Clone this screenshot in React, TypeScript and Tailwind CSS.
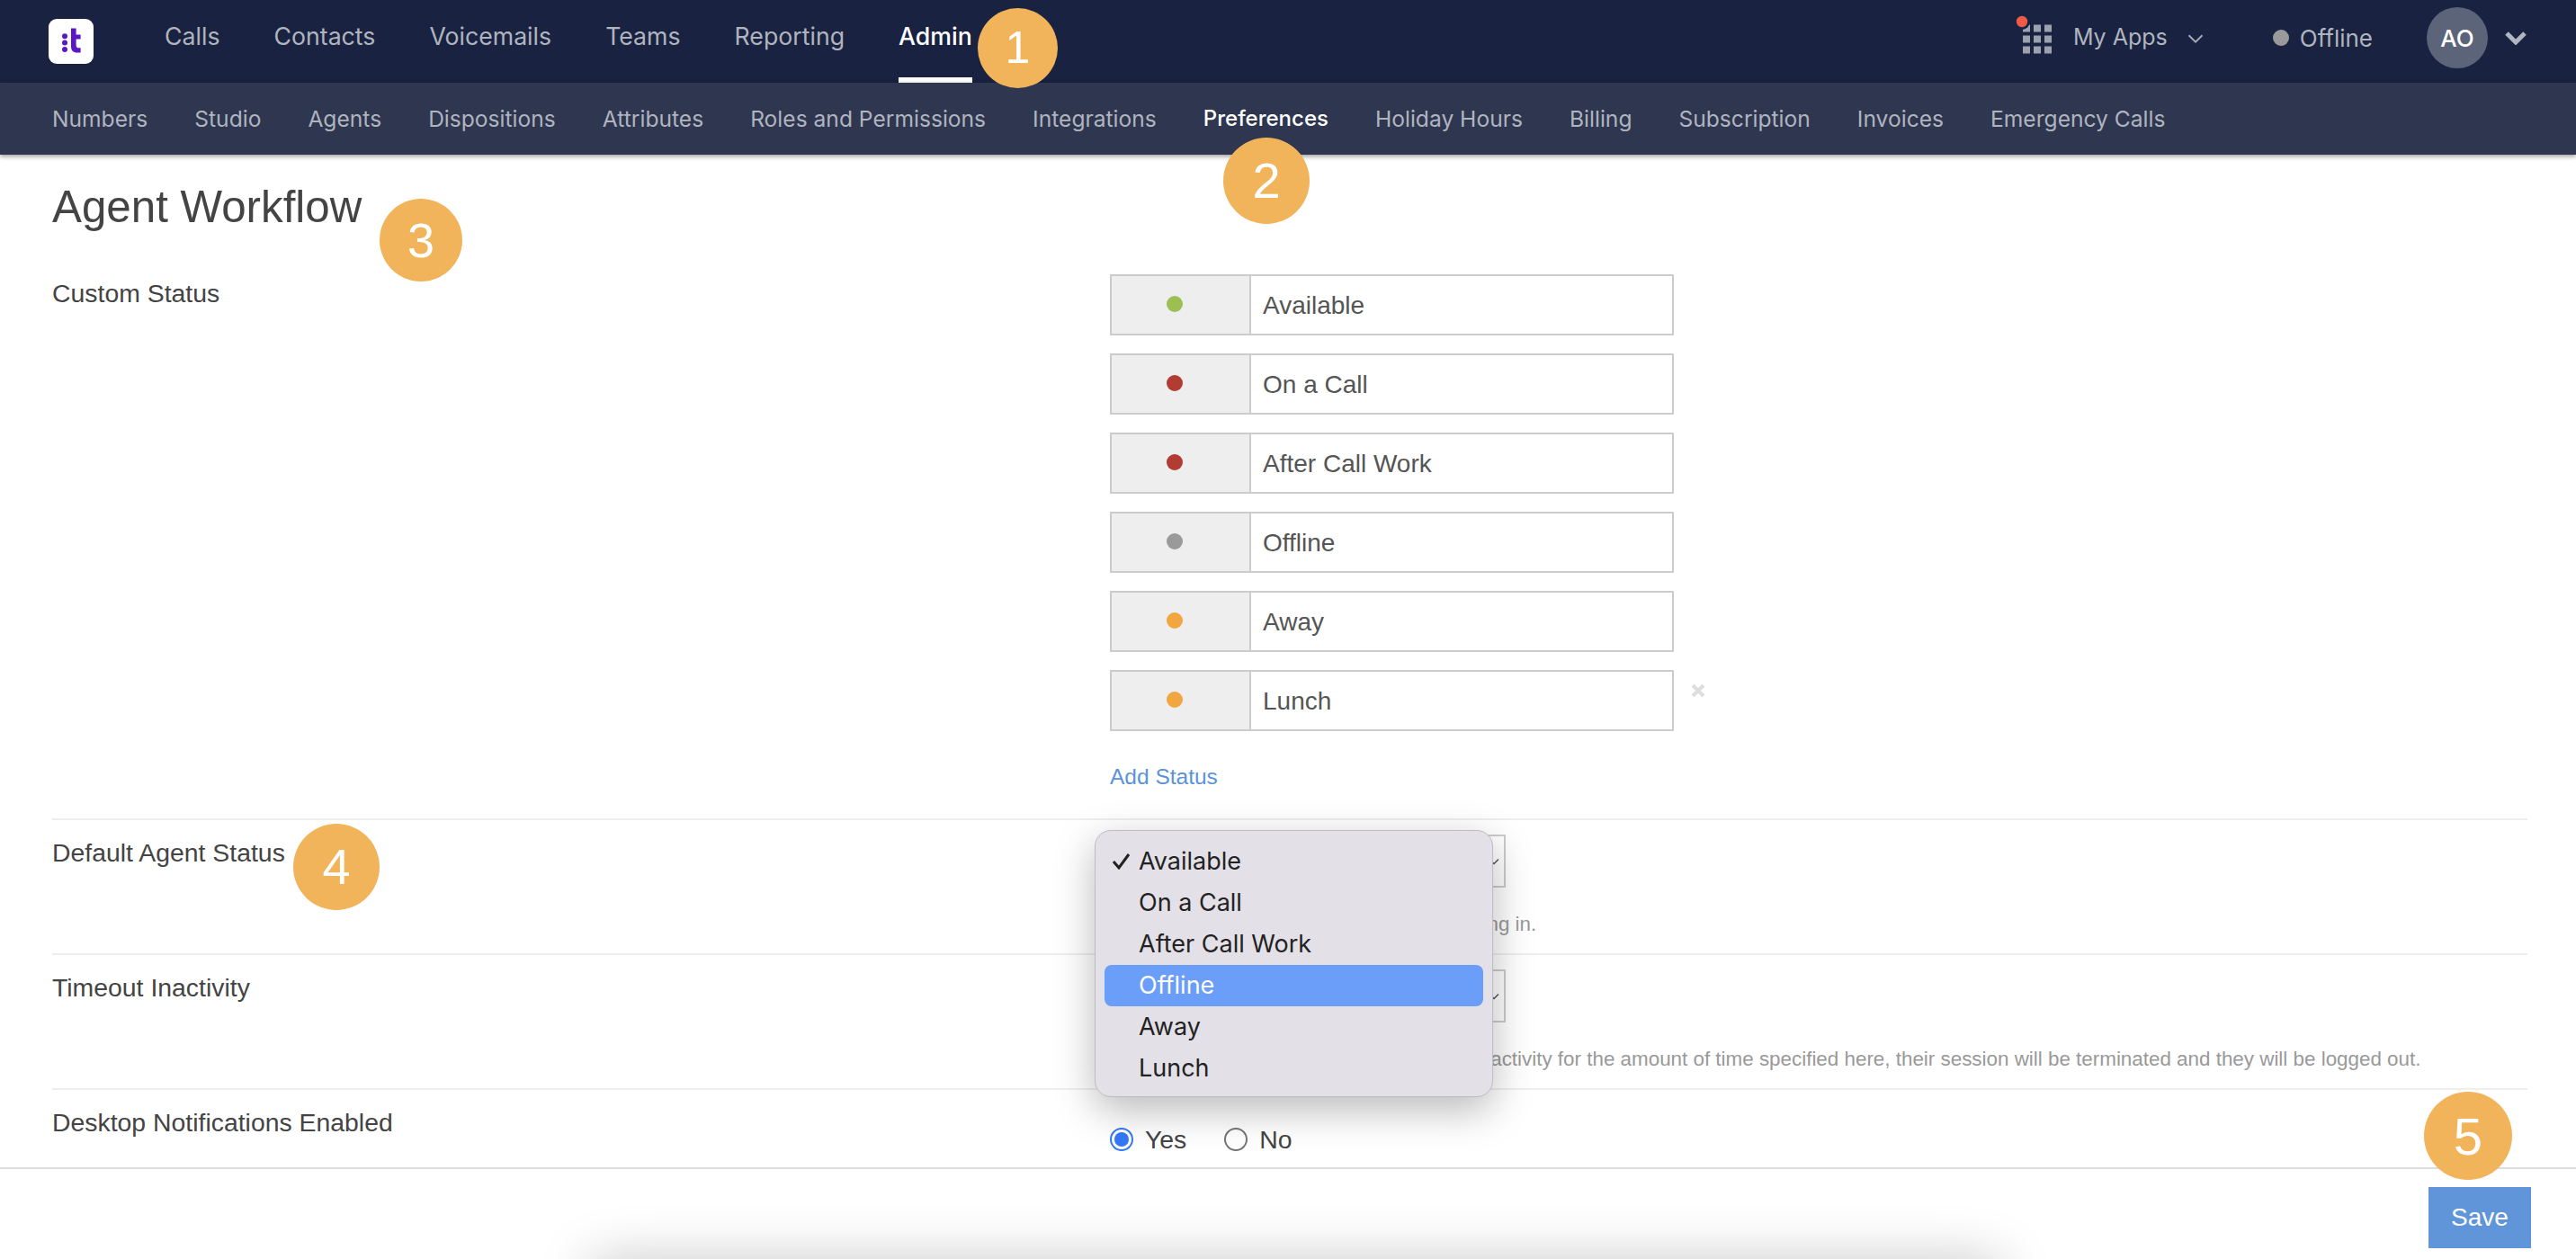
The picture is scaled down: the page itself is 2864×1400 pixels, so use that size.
import React from "react";

const MAIN_NAV = ["Calls", "Contacts", "Voicemails", "Teams", "Reporting", "Admin"];
const SUB_NAV = ["Numbers", "Studio", "Agents", "Dispositions", "Attributes", "Roles and Permissions", "Integrations", "Preferences", "Holiday Hours", "Billing", "Subscription", "Invoices", "Emergency Calls"];
const STATUSES: { label: string; dot: string }[] = [
  { label: "Available", dot: "bg-[#9bbf51]" },
  { label: "On a Call", dot: "bg-[#b23b32]" },
  { label: "After Call Work", dot: "bg-[#b23b32]" },
  { label: "Offline", dot: "bg-[#9a9a9a]" },
  { label: "Away", dot: "bg-[#f2a63f]" },
  { label: "Lunch", dot: "bg-[#f2a63f]" },
];
const OPTIONS = ["Available", "On a Call", "After Call Work", "Offline", "Away", "Lunch"];

function Badge({ n, className }: { n: number; className: string }) {
  return (
    <div className={`absolute z-30 flex items-center justify-center rounded-full bg-[#f1b45a] text-white font-['Liberation_Sans',sans-serif] ${className}`}>
      {n}
    </div>
  );
}

function Chevron({ className, width = 3 }: { className: string; width?: number }) {
  return (
    <svg viewBox="0 0 24 16" className={className} fill="none" stroke="currentColor" strokeWidth={width} aria-hidden="true">
      <path d="M2 3l10 10L22 3" />
    </svg>
  );
}

function Select() {
  return (
    <div className="flex h-[59px] w-[440px] items-center justify-end border-2 border-[#cccccc] bg-white pr-[5px] text-[#555]">
      <Chevron className="h-[8px] w-[12px]" width={3} />
    </div>
  );
}

export default function App() {
  return (
    <div className="relative flex h-[1400px] w-[2864px] flex-col overflow-hidden bg-white font-['Liberation_Sans',sans-serif]">
      {/* top bar */}
      <header className="flex h-[92px] shrink-0 items-center bg-[#192240] pl-[54px] pr-[55px] font-['Inter',sans-serif]">
        <svg viewBox="0 0 50 50" className="h-[50px] w-[50px] shrink-0" aria-label="logo">
          <rect width="50" height="50" rx="9" fill="#ffffff" />
          <circle cx="18" cy="19.3" r="3" fill="#5a17c4" />
          <circle cx="18" cy="26.5" r="3" fill="#5a17c4" />
          <circle cx="18" cy="34" r="3" fill="#5a17c4" />
          <path d="M25 10.5h5.6v7h5v5h-5v6.5c0 2.600 1 3.300 3 3.300h2v5.200h-3.600c-4.700 0-7-2.500-7-7z" fill="#5a17c4" />
        </svg>
        <nav className="ml-[79px] flex h-full items-center gap-[60px] text-[26.7px]">
          {MAIN_NAV.map((item) => (
            <a key={item} className={`relative flex h-full items-center pb-[11px] ${item === "Admin" ? "font-medium text-white" : "text-[#b0b4bf]"}`}>
              {item}
              {item === "Admin" && <span className="absolute bottom-0 left-0 right-0 h-[6px] bg-white" />}
            </a>
          ))}
        </nav>
        <div className="ml-auto flex items-center pb-[8px]">
          <svg viewBox="0 0 44 44" className="mb-[8px] h-[44px] w-[44px]" aria-hidden="true">
            {[0, 1, 2].flatMap((r) =>
              [0, 1, 2].map((c) => (
                <rect key={`${r}${c}`} x={8 + c * 12} y={11.5 + r * 12} width="8" height="8" fill="#9ca1b0" />
              ))
            )}
            <circle cx="7" cy="8" r="9" fill="#192240" />
            <circle cx="7" cy="8" r="6.200" fill="#ee5a45" />
          </svg>
          <span className="ml-[20px] text-[25px] text-[#b0b4bf]">My Apps</span>
          <Chevron className="ml-[22px] mt-[2px] h-[12px] w-[18px] text-[#a6abb8]" width={2.5} />
          <span className="ml-[77px] h-[18px] w-[18px] rounded-full bg-[#9a9a9a]" />
          <span className="ml-[12px] text-[26px] text-[#b0b4bf]">Offline</span>
          <div className="ml-[60px] flex h-[68px] w-[68px] items-center justify-center rounded-full bg-[#5c6479] text-[26px] font-medium text-white">AO</div>
          <Chevron className="ml-[19px] h-[16px] w-[24px] text-[#b0b5c0]" width={5} />
        </div>
      </header>

      {/* sub nav */}
      <nav className="relative z-10 flex h-[80px] shrink-0 items-center gap-[52px] bg-[#2e3650] pl-[58px] font-['Inter',sans-serif] text-[24.6px] shadow-[0_2px_5px_rgba(0,0,0,0.4)]">
        {SUB_NAV.map((item) => (
          <a key={item} className={item === "Preferences" ? "text-[24px] font-medium text-white" : "text-[#b0b4bf]"}>
            {item}
          </a>
        ))}
      </nav>

      {/* content */}
      <main className="min-h-0 flex-1 pl-[58px] pr-[54px] pt-[30px] text-[28.4px] text-[#444]">
        <h1 className="mb-[47px] h-[56px] text-[49.3px] font-normal leading-[56px] text-[#444]">Agent Workflow</h1>

        <section className="grid h-[607px] grid-cols-[1176px_1fr] border-b-2 border-[#eeeeee]">
          <div className="pt-[1px] leading-[40px]">Custom Status</div>
          <div>
            <div className="flex flex-col gap-[20px]">
              {STATUSES.map((s) => (
                <div key={s.label} className="flex items-center">
                  <div className="flex h-[68px] w-[627px] border-2 border-[#cccccc]">
                    <div className="flex w-[155px] items-center justify-center border-r-2 border-[#cccccc] bg-[#eeeeee] pb-[2px] pr-[14px]">
                      <span className={`h-[18px] w-[18px] rounded-full ${s.dot}`} />
                    </div>
                    <div className="flex flex-1 items-center pl-[13px] pt-[1px] text-[28px] text-[#555]">{s.label}</div>
                  </div>
                  {s.label === "Lunch" && (
                    <svg viewBox="0 0 16 16" className="mb-[22px] ml-[19px] h-[16px] w-[16px]" stroke="#dddddd" strokeWidth="4" aria-hidden="true">
                      <path d="M2 2l12 12M14 2L2 14" />
                    </svg>
                  )}
                </div>
              ))}
            </div>
            <a className="mt-[36px] block text-[24.5px] leading-[30px] text-[#5b93d8]">Add Status</a>
          </div>
        </section>

        <section className="grid h-[150px] grid-cols-[1176px_1fr] border-b-2 border-[#eeeeee] pt-[16px]">
          <div className="leading-[40px]">Default Agent Status</div>
          <div>
            <Select />
            <p className="mt-[26px] text-[22.4px] leading-[30px] text-[#999]">Agents will be set to this status when logging in.</p>
          </div>
        </section>

        <section className="grid h-[150px] grid-cols-[1176px_1fr] border-b-2 border-[#eeeeee] pt-[16px]">
          <div className="leading-[40px]">Timeout Inactivity</div>
          <div>
            <Select />
            <p className="mt-[26px] whitespace-nowrap text-[22.4px] leading-[30px] text-[#999]">If an agent does not have any sign of user activity for the amount of time specified here, their session will be terminated and they will be logged out.</p>
          </div>
        </section>

        <section className="grid grid-cols-[1176px_1fr] pt-[16px]">
          <div className="leading-[40px]">Desktop Notifications Enabled</div>
          <div className="mt-[19px] flex h-[40px] items-center">
            <span className="flex h-[26px] w-[26px] items-center justify-center rounded-full border-2 border-[#3478f6] bg-white">
              <span className="h-[16px] w-[16px] rounded-full bg-[#3478f6]" />
            </span>
            <span className="ml-[13px]">Yes</span>
            <span className="ml-[42px] h-[26px] w-[26px] rounded-full border-2 border-[#767676] bg-white" />
            <span className="ml-[13px]">No</span>
          </div>
        </section>
      </main>

      {/* footer */}
      <footer className="relative z-10 flex h-[102px] shrink-0 items-start justify-end border-t-2 border-[#dddddd] bg-white pr-[50px] pt-[20px]">
        <button className="flex h-[68px] w-[114px] items-center justify-center bg-[#6096d9] text-[28px] text-white">Save</button>
      </footer>

      {/* native popup menu */}
      <div className="absolute left-[1217px] top-[923px] z-20 h-[297px] w-[443px] rounded-[18px] border border-[#bdbcc0] bg-[#e3e1e7] px-[10px] pt-[11px] font-['Inter',sans-serif] text-[27px] text-[#222] shadow-[0_14px_45px_rgba(0,0,0,0.28)]">
        {OPTIONS.map((o) => (
          <div key={o} className={`relative flex h-[46px] items-center rounded-[8px] pl-[38px] pt-[1px] ${o === "Offline" ? "bg-[#6a9ef8] text-white" : ""}`}>
            {o === "Available" && (
              <svg viewBox="0 0 20 18" className="absolute left-[9px] top-[14px] h-[18px] w-[20px]" fill="none" stroke="#222" strokeWidth="3" aria-hidden="true">
                <path d="M1 9l6 7L18 1" />
              </svg>
            )}
            {o}
          </div>
        ))}
      </div>

      {/* shadow of the window below the page's edge */}
      <div className="absolute left-[655px] top-[1400px] z-20 h-[60px] w-[1570px] rounded-[20px] bg-white shadow-[0_0_60px_rgba(0,0,0,0.22)]" />

      <Badge n={1} className="left-[1087px] top-[9px] h-[89px] w-[89px] text-[50px]" />
      <Badge n={2} className="left-[1360px] top-[153px] h-[96px] w-[96px] text-[56px]" />
      <Badge n={3} className="left-[422px] top-[221px] h-[92px] w-[92px] text-[54px]" />
      <Badge n={4} className="left-[326px] top-[916px] h-[96px] w-[96px] text-[56px]" />
      <Badge n={5} className="left-[2695px] top-[1214px] h-[98px] w-[98px] text-[58px]" />
    </div>
  );
}
